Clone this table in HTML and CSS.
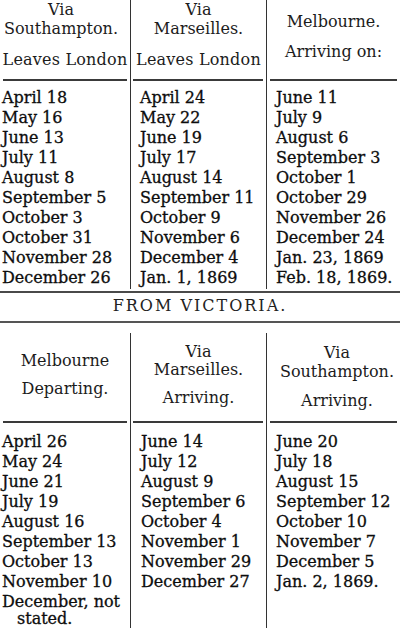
FILE: index.html
```html
<!DOCTYPE html>
<html lang="en">
<head>
<meta charset="utf-8">
<title>Mail Steamers</title>
<link rel="stylesheet" href="styles.css">
</head>
<body>
<section class="table top">
  <div class="col c1">
    <div class="head">
      <div class="l shift">Via</div>
      <div class="l shift">Southampton.</div>
      <div class="l gap">Leaves London</div>
    </div>
    <div class="rule"></div>
    <ul class="dates">
      <li>April 18</li><li>May 16</li><li>June 13</li><li>July 11</li><li>August 8</li>
      <li>September 5</li><li>October 3</li><li>October 31</li><li>November 28</li><li>December 26</li>
    </ul>
  </div>
  <div class="col c2">
    <div class="head">
      <div class="l">Via</div>
      <div class="l">Marseilles.</div>
      <div class="l gap">Leaves London</div>
    </div>
    <div class="rule"></div>
    <ul class="dates">
      <li>April 24</li><li>May 22</li><li>June 19</li><li>July 17</li><li>August 14</li>
      <li>September 11</li><li>October 9</li><li>November 6</li><li>December 4</li><li>Jan. 1, 1869</li>
    </ul>
  </div>
  <div class="col c3">
    <div class="head pad12">
      <div class="l">Melbourne.</div>
      <div class="l gap11">Arriving on:</div>
    </div>
    <div class="rule"></div>
    <ul class="dates">
      <li>June 11</li><li>July 9</li><li>August 6</li><li>September 3</li><li>October 1</li>
      <li>October 29</li><li>November 26</li><li>December 24</li><li>Jan. 23, 1869</li><li>Feb. 18, 1869.</li>
    </ul>
  </div>
</section>
<div class="thick"></div>
<div class="title">FROM VICTORIA.</div>
<div class="thin"></div>
<section class="table bottom">
  <div class="col c1">
    <div class="head pad18">
      <div class="l">Melbourne</div>
      <div class="l gap9">Departing.</div>
    </div>
    <div class="rule"></div>
    <ul class="dates">
      <li>April 26</li><li>May 24</li><li>June 21</li><li>July 19</li><li>August 16</li>
      <li>September 13</li><li>October 13</li><li>November 10</li><li class="hang">December, not stated.</li>
    </ul>
  </div>
  <div class="col c2">
    <div class="head pad10">
      <div class="l s18">Via</div>
      <div class="l s18">Marseilles.</div>
      <div class="l gap9">Arriving.</div>
    </div>
    <div class="rule"></div>
    <ul class="dates">
      <li>June 14</li><li>July 12</li><li>August 9</li><li>September 6</li><li>October 4</li>
      <li>November 1</li><li>November 29</li><li>December 27</li>
    </ul>
  </div>
  <div class="col c3">
    <div class="head pad10 right">
      <div class="l">Via</div>
      <div class="l">Southampton.</div>
      <div class="l gap10">Arriving.</div>
    </div>
    <div class="rule"></div>
    <ul class="dates">
      <li>June 20</li><li>July 18</li><li>August 15</li><li>September 12</li><li>October 10</li>
      <li>November 7</li><li>December 5</li><li>Jan. 2, 1869.</li>
    </ul>
  </div>
</section>
</body>
</html>
```
FILE: styles.css
```css
html, body {
  margin: 0;
  padding: 0;
  background: #ffffff;
  height: 628px;
  overflow: hidden;
}
body {
  font-family: "DejaVu Serif", "Liberation Serif", serif;
  font-size: 16px;
  color: #111111;
}
.table {
  display: grid;
  grid-template-columns: 130px 136px 134px;
}
.top {
  height: 289px;
}
.bottom {
  margin-top: 10px;
  height: 295px;
}
.col {
  display: flex;
  flex-direction: column;
  min-width: 0;
}
.c2, .c3 {
  border-left: 1px solid #333333;
}
.head {
  display: flex;
  flex-direction: column;
  text-align: center;
  color: #1c1c1c;
  box-sizing: border-box;
}
.top .head { height: 79px; }
.bottom .head { height: 88px; }
.head.pad12 { padding-top: 12px; }
.head.pad18 { padding-top: 18px; }
.head.pad10 { padding-top: 10px; }
.head.right { padding-left: 7px; }
.l {
  line-height: 19px;
  white-space: nowrap;
}
.l.s18 { line-height: 18px; }
.l.shift { padding-right: 8px; }
.l.gap { margin-top: 12px; letter-spacing: 0.2px; }
.l.gap11 { margin-top: 11px; }
.l.gap10 { margin-top: 10px; }
.l.gap9 { margin-top: 9px; }
.rule {
  height: 2px;
  background: #3a3a3a;
}
.c1 .rule { margin: 0 3px; }
.c2 .rule { margin: 0 3px 0 2px; }
.c3 .rule { margin: 0 3px; }
.dates {
  list-style: none;
  margin: 0;
  padding: 7px 0 0 0;
  line-height: 20px;
  white-space: nowrap;
  color: #0d0d0d;
  -webkit-text-stroke: 0.3px #0d0d0d;
}
.bottom .dates { padding-top: 9px; }
.c1 .dates { padding-left: 2px; }
.c2 .dates { padding-left: 9px; }
.c3 .dates { padding-left: 9px; }
.bottom .c2 .dates { padding-left: 10px; }
.dates li.hang {
  white-space: normal;
  padding-left: 15px;
  text-indent: -15px;
  line-height: 17px;
  margin-top: 1px;
}
.thick {
  height: 2px;
  margin-top: 2px;
  background: #4a4a4a;
}
.title {
  text-align: center;
  font-size: 16px;
  letter-spacing: 2px;
  line-height: 24px;
  color: #222222;
  padding-top: 1px;
}
.thin {
  height: 2px;
  margin-top: 3px;
  background: #555555;
}
```
